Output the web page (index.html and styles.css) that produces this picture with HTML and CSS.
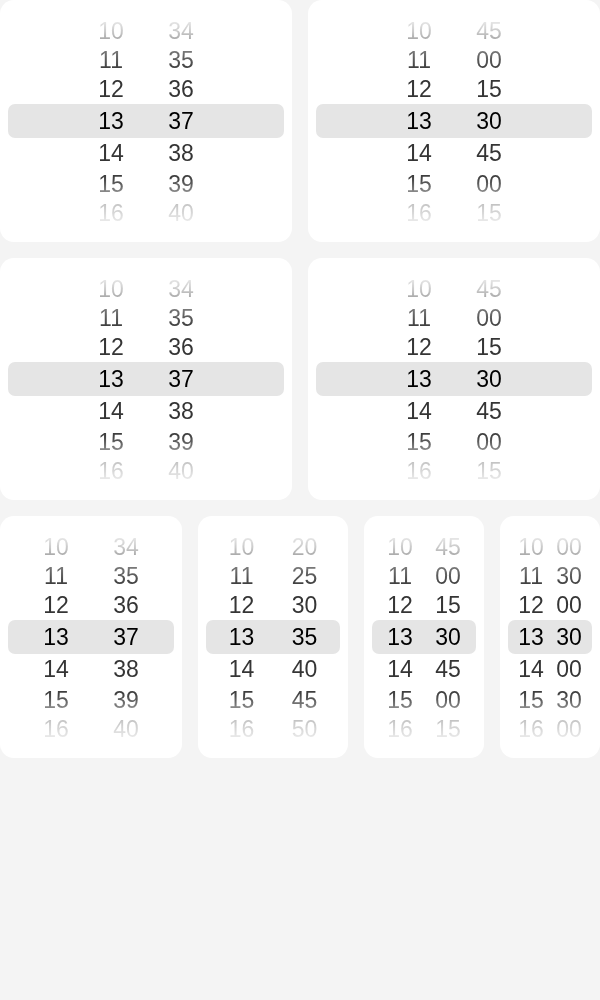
FILE: index.html
```html
<!DOCTYPE html>
<html lang="en">
<head>
<meta charset="utf-8">
<title>Time pickers</title>
<link rel="stylesheet" href="styles.css">
</head>
<body>
<div class="page">
  <div class="row row-2">
    <div class="card">
      <div class="sel-bar"></div>
      <div class="cols">
        <div class="col"><span class="it i1">10</span><span class="it i2">11</span><span class="it i3">12</span><span class="it sel">13</span><span class="it i5">14</span><span class="it i6">15</span><span class="it i7">16</span></div>
        <div class="col"><span class="it i1">34</span><span class="it i2">35</span><span class="it i3">36</span><span class="it sel">37</span><span class="it i5">38</span><span class="it i6">39</span><span class="it i7">40</span></div>
      </div>
    </div>
    <div class="card">
      <div class="sel-bar"></div>
      <div class="cols">
        <div class="col"><span class="it i1">10</span><span class="it i2">11</span><span class="it i3">12</span><span class="it sel">13</span><span class="it i5">14</span><span class="it i6">15</span><span class="it i7">16</span></div>
        <div class="col"><span class="it i1">45</span><span class="it i2">00</span><span class="it i3">15</span><span class="it sel">30</span><span class="it i5">45</span><span class="it i6">00</span><span class="it i7">15</span></div>
      </div>
    </div>
  </div>
  <div class="row row-2">
    <div class="card">
      <div class="sel-bar"></div>
      <div class="cols">
        <div class="col"><span class="it i1">10</span><span class="it i2">11</span><span class="it i3">12</span><span class="it sel">13</span><span class="it i5">14</span><span class="it i6">15</span><span class="it i7">16</span></div>
        <div class="col"><span class="it i1">34</span><span class="it i2">35</span><span class="it i3">36</span><span class="it sel">37</span><span class="it i5">38</span><span class="it i6">39</span><span class="it i7">40</span></div>
      </div>
    </div>
    <div class="card">
      <div class="sel-bar"></div>
      <div class="cols">
        <div class="col"><span class="it i1">10</span><span class="it i2">11</span><span class="it i3">12</span><span class="it sel">13</span><span class="it i5">14</span><span class="it i6">15</span><span class="it i7">16</span></div>
        <div class="col"><span class="it i1">45</span><span class="it i2">00</span><span class="it i3">15</span><span class="it sel">30</span><span class="it i5">45</span><span class="it i6">00</span><span class="it i7">15</span></div>
      </div>
    </div>
  </div>
  <div class="row row-4">
    <div class="card">
      <div class="sel-bar"></div>
      <div class="cols">
        <div class="col"><span class="it i1">10</span><span class="it i2">11</span><span class="it i3">12</span><span class="it sel">13</span><span class="it i5">14</span><span class="it i6">15</span><span class="it i7">16</span></div>
        <div class="col"><span class="it i1">34</span><span class="it i2">35</span><span class="it i3">36</span><span class="it sel">37</span><span class="it i5">38</span><span class="it i6">39</span><span class="it i7">40</span></div>
      </div>
    </div>
    <div class="card">
      <div class="sel-bar"></div>
      <div class="cols">
        <div class="col"><span class="it i1">10</span><span class="it i2">11</span><span class="it i3">12</span><span class="it sel">13</span><span class="it i5">14</span><span class="it i6">15</span><span class="it i7">16</span></div>
        <div class="col"><span class="it i1">20</span><span class="it i2">25</span><span class="it i3">30</span><span class="it sel">35</span><span class="it i5">40</span><span class="it i6">45</span><span class="it i7">50</span></div>
      </div>
    </div>
    <div class="card">
      <div class="sel-bar"></div>
      <div class="cols">
        <div class="col"><span class="it i1">10</span><span class="it i2">11</span><span class="it i3">12</span><span class="it sel">13</span><span class="it i5">14</span><span class="it i6">15</span><span class="it i7">16</span></div>
        <div class="col"><span class="it i1">45</span><span class="it i2">00</span><span class="it i3">15</span><span class="it sel">30</span><span class="it i5">45</span><span class="it i6">00</span><span class="it i7">15</span></div>
      </div>
    </div>
    <div class="card">
      <div class="sel-bar"></div>
      <div class="cols">
        <div class="col"><span class="it i1">10</span><span class="it i2">11</span><span class="it i3">12</span><span class="it sel">13</span><span class="it i5">14</span><span class="it i6">15</span><span class="it i7">16</span></div>
        <div class="col"><span class="it i1">00</span><span class="it i2">30</span><span class="it i3">00</span><span class="it sel">30</span><span class="it i5">00</span><span class="it i6">30</span><span class="it i7">00</span></div>
      </div>
    </div>
  </div>
</div>
</body>
</html>
```

FILE: styles.css
```css
html, body {
  margin: 0;
  padding: 0;
  background: #f4f4f4;
}

body {
  font-family: "Liberation Sans", Arial, sans-serif;
  width: 600px;
  height: 1000px;
  overflow: hidden;
}

.page {
  display: flex;
  flex-direction: column;
  gap: 16px;
}

.row {
  display: grid;
  column-gap: 16px;
}

.row-2 {
  grid-template-columns: 292px 292px;
}

.row-4 {
  grid-template-columns: 182px 150px 120px 100px;
}

.card {
  background: #ffffff;
  border-radius: 14px;
  height: 242px;
  padding: 0 8px;
  display: grid;
  grid-template-columns: 1fr;
  grid-template-rows: 242px;
}

.sel-bar {
  grid-area: 1 / 1;
  align-self: start;
  margin-top: 104px;
  height: 34px;
  background: #e5e5e5;
  border-radius: 7px;
}

.cols {
  grid-area: 1 / 1;
  display: flex;
  justify-content: center;
  padding: 16px 4px 0;
  -webkit-mask-image: linear-gradient(to bottom,
    rgba(0,0,0,0) 13px,
    rgba(0,0,0,0.27) 32px,
    rgba(0,0,0,0.7) 53px,
    rgba(0,0,0,0.95) 68px,
    #000 74px,
    #000 172px,
    rgba(0,0,0,0.9) 180px,
    rgba(0,0,0,0.58) 192px,
    rgba(0,0,0,0.28) 205px,
    rgba(0,0,0,0.1) 222px,
    rgba(0,0,0,0) 232px);
  mask-image: linear-gradient(to bottom,
    rgba(0,0,0,0) 13px,
    rgba(0,0,0,0.27) 32px,
    rgba(0,0,0,0.7) 53px,
    rgba(0,0,0,0.95) 68px,
    #000 74px,
    #000 172px,
    rgba(0,0,0,0.9) 180px,
    rgba(0,0,0,0.58) 192px,
    rgba(0,0,0,0.28) 205px,
    rgba(0,0,0,0.1) 222px,
    rgba(0,0,0,0) 232px);
}

.col {
  flex: 1 1 0;
  max-width: 70px;
  display: flex;
  flex-direction: column;
  align-items: center;
}

.it {
  display: block;
  font-size: 23px;
  color: #353535;
  text-align: center;
}

.i1 { height: 30px; line-height: 30px; }
.i2 { height: 29px; line-height: 29px; }
.i3 { height: 29px; line-height: 29px; }
.sel { height: 34px; line-height: 34px; color: #000000; }
.i5 { height: 31px; line-height: 31px; }
.i6 { height: 30px; line-height: 30px; }
.i7 { height: 28px; line-height: 28px; }
```
